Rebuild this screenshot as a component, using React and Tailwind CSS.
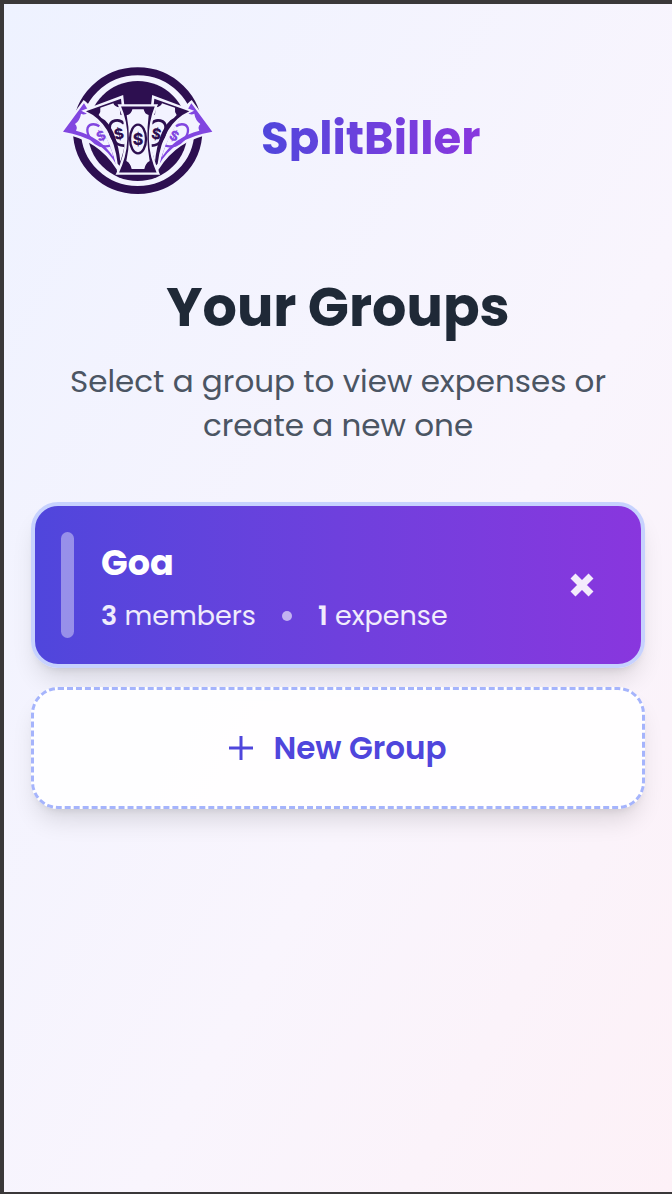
import React, { useState } from "react";

const initialGroups = [{ id: 1, name: "Goa", members: 3, expenses: 1 }];

const Dollar = ({ x, y, size, color, rotate = 0 }) => (
  <text
    x={x}
    y={y}
    fontSize={size}
    fontWeight="800"
    fontFamily="Inter, sans-serif"
    textAnchor="middle"
    dominantBaseline="central"
    fill={color}
    transform={`rotate(${rotate} ${x} ${y})`}
  >
    $
  </text>
);

// One half of the fan, the other half is mirrored
const SideNotes = () => (
  <g strokeLinejoin="miter">
    <path d="M40 230L102 145Q178 212 205 338Q148 248 40 230Z" fill="#f3f3ff" stroke="#f3f3ff" strokeWidth="14" />
    <path d="M39 230L102 145L116 168Q170 230 200 331Q158 250 39 230Z" fill="#8146e0" />
    <path d="M75 207Q90 196 93 176Q104 183 117 170Q160 215 186 290Q188 300 190 306Q152 246 78 227Q84 216 75 207Z" fill="#f3f3ff" />
    <path d="M148 214C132 203 113 207 112 224C111 244 131 265 150 272Q168 276 180 272" fill="none" stroke="#8146e0" strokeWidth="7" />
    <path d="M110 168L214 129L222 200Q232 280 205 334Q182 204 110 168Z" fill="#f3f3ff" stroke="#f3f3ff" strokeWidth="13" />
    <path d="M108 169L213 131L217 170L234 210L216 340L203 326Q188 205 108 169Z" fill="#2d0f50" />
    <path d="M146 180Q153 170 151 158L190 145Q194 156 209 157L211 179Q224 180 228 194Q234 252 211 320Q202 232 165 196Q155 192 146 180Z" fill="#f3f3ff" />
    <path d="M222 206C207 189 179 195 179 218C179 247 197 274 224 272" fill="none" stroke="#2d0f50" strokeWidth="8" />
  </g>
);

const Logo = () => (
  <svg viewBox="0 0 525 450" className="w-[175px] h-[150px] shrink-0" role="img" aria-label="SplitBiller logo">
    <ellipse cx="263" cy="227" rx="182" ry="178" fill="#f3f3ff" stroke="#2d0f50" strokeWidth="24" />
    <circle cx="263" cy="228" r="150" fill="#2d0f50" />
    <SideNotes />
    <g transform="translate(526 0) scale(-1 1)">
      <SideNotes />
    </g>
    <Dollar x={153} y={242} size={40} color="#8146e0" rotate={-25} />
    <Dollar x={373} y={242} size={40} color="#8146e0" rotate={25} />
    <Dollar x={207} y={237} size={44} color="#2d0f50" rotate={-12} />
    <Dollar x={319} y={237} size={44} color="#2d0f50" rotate={12} />
    <path d="M208 151H319Q278 252 325 356H202Q252 252 208 151Z" fill="#2d0f50" stroke="#f3f3ff" strokeWidth="7" />
    <path d="M247 163H281Q284 178 296 180Q287 252 299 318Q286 325 283 342H245Q242 325 229 318Q244 252 230 181Q245 177 247 163Z" fill="#f3f3ff" />
    <ellipse cx="264" cy="252" rx="24" ry="43" fill="#f3f3ff" stroke="#2d0f50" strokeWidth="7" />
    <Dollar x={264} y={251} size={48} color="#2d0f50" />
  </svg>
);

const GroupCard = ({ group, onDelete }) => (
  <div className="flex items-center rounded-[27px] border-4 border-[#c7d2fe] bg-gradient-to-r from-[#4f46dc] to-[#8936de] bg-origin-border p-[26px] shadow-[0_16px_24px_-5px_rgba(0,0,0,0.12),0_6px_10px_-6px_rgba(0,0,0,0.12)]">
    <div className="w-[13px] self-stretch rounded-full bg-white/40"></div>
    <div className="ml-[27px] flex-1 pt-2 pb-1">
      <h3 className="text-[35px] leading-[46px] font-bold text-white">{group.name}</h3>
      <div className="mt-3 flex items-center text-[27px] leading-[36px] text-white/90">
        <span>
          <span className="font-semibold">{group.members}</span> members
        </span>
        <span className="mx-[26px] h-[10px] w-[10px] rounded-full bg-white/60"></span>
        <span>
          <span className="font-semibold">{group.expenses}</span> expense
        </span>
      </div>
    </div>
    <button
      onClick={() => onDelete(group.id)}
      aria-label={`Delete ${group.name}`}
      className="mr-3 p-2 text-white/90"
    >
      <svg viewBox="0 0 26 26" className="h-[26px] w-[26px]" fill="none" stroke="currentColor" strokeWidth="7">
        <path d="M4 4L22 22M22 4L4 22" />
      </svg>
    </button>
  </div>
);

const App = () => {
  const [groups, setGroups] = useState(initialGroups);

  const handleDelete = (id) => {
    setGroups((prev) => prev.filter((group) => group.id !== id));
  };

  const handleCreate = () => {
    setGroups((prev) => [
      ...prev,
      { id: Date.now(), name: "Group", members: 1, expenses: 0 },
    ]);
  };

  return (
    <div className="flex min-h-screen flex-col bg-[#3a3839] pt-1 pb-0.5 pl-1 font-['Poppins','Inter',sans-serif]">
      <div className="flex-1 bg-gradient-to-br from-[#eef2ff] via-[#f9f5fd] via-60% to-[#fdf1f7] px-[27px]">
        {/* Header */}
        <header className="flex items-center gap-9 px-[19px] pt-[51px]">
          <Logo />
          {/* Tight line box, the gradient is cut off at its lower edge */}
          <h1 className="mt-4 bg-gradient-to-r from-[#4f46dc] to-[#8936de] bg-clip-text text-[45px] leading-none font-bold text-transparent">
            SplitBiller
          </h1>
        </header>

        <main className="pt-[66px]">
          <div className="text-center">
            <h2 className="text-[54px] leading-[72px] font-bold text-[#1f2937]">Your Groups</h2>
            <p className="mt-4 px-4 text-[31px] leading-[44px] text-[#4b5563]">
              Select a group to view expenses or create a new one
            </p>
          </div>

          <div className="mt-[55px] flex flex-col gap-[19px]">
            {groups.map((group) => (
              <GroupCard key={group.id} group={group} onDelete={handleDelete} />
            ))}

            <button
              onClick={handleCreate}
              className="flex items-center justify-center gap-5 rounded-[27px] border-[3px] border-dashed border-[#a5b4fc] bg-white/90 py-[33px] text-[31px] leading-[50px] font-semibold text-[#4f46dc] shadow-[0_16px_24px_-5px_rgba(0,0,0,0.12),0_6px_10px_-6px_rgba(0,0,0,0.12)]"
            >
              <svg viewBox="0 0 24 24" className="h-6 w-6" fill="none" stroke="currentColor" strokeWidth="3">
                <path d="M12 0V24M0 12H24" />
              </svg>
              New Group
            </button>
          </div>
        </main>
      </div>
    </div>
  );
};

export default App;
